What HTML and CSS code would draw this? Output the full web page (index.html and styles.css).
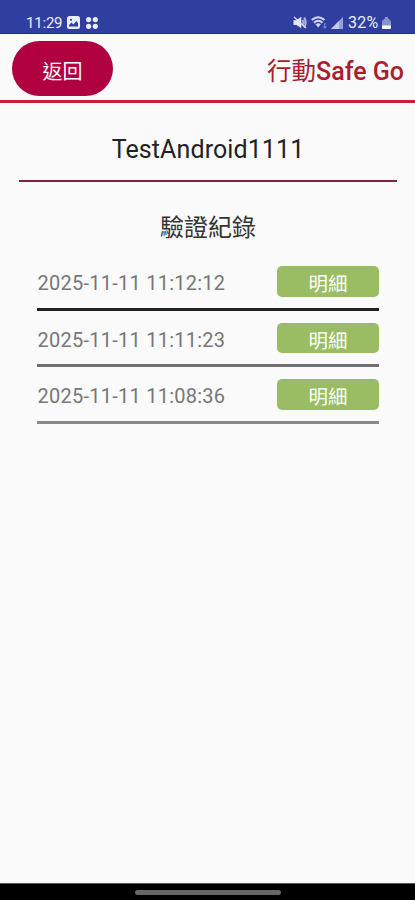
FILE: index.html
```html
<!DOCTYPE html>
<html lang="zh-Hant">
<head>
    <meta charset="UTF-8">
    <meta name="viewport" content="width=device-width, initial-scale=1.0">
    <title>行動Safe Go</title>
    <link rel="stylesheet" href="styles.css">
</head>
<body>
    <div class="screen">
        <!-- Status bar -->
        <div class="status-bar">
            <div class="status-left">
                <span class="clock">11:29</span>
                <svg class="icon-image" width="13" height="13" viewBox="0 0 13 13">
                    <rect width="13" height="13" rx="2.5" fill="#e9edfb"/>
                    <path d="M2 10.5V9l2.5-2.5 2 2L9.3 5 11 7.3v3.2z" fill="#303f9f"/>
                    <circle cx="4" cy="3.8" r="1.1" fill="#303f9f"/>
                </svg>
                <svg class="icon-dots" width="14" height="14" viewBox="0 0 14 14" fill="#e9edfb">
                    <circle cx="3.6" cy="3.6" r="2.6"/>
                    <circle cx="10.3" cy="3.6" r="2.6"/>
                    <circle cx="3.6" cy="10.3" r="2.6"/>
                    <circle cx="10.3" cy="10.3" r="2.6"/>
                </svg>
            </div>
            <div class="status-right">
                <svg width="14" height="13" viewBox="0 0 14 13">
                    <path d="M0.5 4.2h3L8.300 0.800v11.400L3.500 9h-3z" fill="#e3e8fa"/>
                    <path d="M9.500 4q2 2.500 0 5M11.200 1.500q3 5 0 10" fill="none" stroke="#aab4e2" stroke-width="2"/>
                    <path d="M1 1l12 11" stroke="#dde2f7" stroke-width="1.300"/>
                </svg>
                <svg class="icon-wifi" width="17" height="13" viewBox="0 0 17 13">
                    <path d="M0.800 4q6.200-5.600 12.700 0M3 6.800q4.300-4 8.500 0" fill="none" stroke="#d0d7f3" stroke-width="2"/>
                    <path d="M4.500 8.300q2.700-2 5.400 0L7.200 11.500z" fill="#d0d7f3"/>
                    <path d="M13.800 7v5M12.200 10.400l1.600 1.800 1.600-1.800" fill="none" stroke="#8e9ad6" stroke-width="1"/>
                </svg>
                <svg class="icon-signal" width="12" height="12" viewBox="0 0 12 12">
                    <path d="M0 12L12 0v12z" fill="#95a1db"/>
                    <path d="M0 12L8 4v8z" fill="#c3cbee"/>
                </svg>
                <span class="battery-text">32%</span>
                <svg class="icon-battery" width="9" height="12" viewBox="0 0 9 12">
                    <path d="M3 0h3v1.200L9 4v6.500A1.500 1.500 0 0 1 7.500 12h-6A1.500 1.500 0 0 1 0 10.500V4l3-2.800z" fill="#8793d0"/>
                    <path d="M0 8.500h9v2A1.500 1.500 0 0 1 7.500 12h-6A1.500 1.500 0 0 1 0 10.500z" fill="#fff"/>
                </svg>
            </div>
        </div>

        <!-- Header -->
        <div class="header">
            <button class="back-btn">返回</button>
            <h1 class="app-name"><span class="app-name-zh">行動</span>Safe Go</h1>
        </div>

        <!-- Record list -->
        <div class="content">
            <h2 class="device-name">TestAndroid1111</h2>
            <h3 class="list-title">驗證紀錄</h3>
            <ul class="record-list">
                <li class="record first">
                    <span class="time">2025-11-11 11:12:12</span>
                    <button class="detail-btn">明細</button>
                </li>
                <li class="record second">
                    <span class="time">2025-11-11 11:11:23</span>
                    <button class="detail-btn">明細</button>
                </li>
                <li class="record">
                    <span class="time">2025-11-11 11:08:36</span>
                    <button class="detail-btn">明細</button>
                </li>
            </ul>
        </div>

        <!-- Gesture bar -->
        <div class="nav-bar">
            <div class="nav-handle"></div>
        </div>
    </div>
</body>
</html>
```
FILE: styles.css
```css
* {
    margin: 0;
    padding: 0;
    box-sizing: border-box;
}

body {
    font-family: Roboto, "Noto Sans CJK TC", sans-serif;
    background: #fafafa;
}

.screen {
    display: flex;
    flex-direction: column;
    width: 415px;
    height: 900px;
    background: #fafafa;
    overflow: hidden;
}

/* Status bar */
.status-bar {
    display: flex;
    justify-content: space-between;
    height: 34px;
    padding: 11px 24px 0 26px;
    background: #303f9f;
    border-bottom: 1px solid #1f2b94;
    color: #e9edfb;
}

.status-left,
.status-right {
    display: flex;
    align-items: center;
    height: 23px;
}

.clock,
.battery-text {
    font-size: 15px;
    line-height: 23px;
}

.clock {
    width: 36px;
    padding-top: 1px;
    letter-spacing: -0.2px;
}

.icon-image {
    margin-left: 5px;
}

.icon-dots {
    margin-left: 5px;
}

.icon-wifi {
    margin-left: 4px;
}

.icon-signal {
    margin-left: 3px;
}

.battery-text {
    width: 32px;
    margin-left: 5px;
    font-size: 16px;
    letter-spacing: 0.2px;
}

.icon-battery {
    margin-left: 2px;
}

/* Header */
.header {
    display: flex;
    align-items: center;
    justify-content: space-between;
    height: 69px;
    padding: 2px 11px 0 12px;
    border-bottom: 3px solid #c8202f;
}

.back-btn {
    width: 101px;
    height: 55px;
    border: none;
    border-radius: 28px;
    background: #b00040;
    color: #fff;
    font-family: inherit;
    font-size: 20px;
    line-height: 55px;
    padding-top: 4px;
}

.app-name {
    padding-top: 7px;
    font-size: 25px;
    font-weight: 500;
    line-height: 32px;
    color: #a91d2d;
}

.app-name-zh {
    font-size: 24.5px;
    font-weight: 400;
}

/* Content */
.content {
    flex: 1;
    padding: 0 18px 0 19px;
}

.device-name {
    height: 79px;
    padding-top: 30px;
    border-bottom: 2px solid #871f43;
    font-size: 25px;
    font-weight: 400;
    line-height: 34px;
    letter-spacing: 0.1px;
    text-align: center;
    color: #222;
}

.list-title {
    padding-top: 28px;
    font-size: 24px;
    font-weight: 400;
    line-height: 36px;
    text-align: center;
    color: #333;
}

.record-list {
    list-style: none;
    margin-top: 8px;
    padding: 0 18px;
}

.record {
    display: flex;
    align-items: flex-start;
    justify-content: space-between;
    height: 56.5px;
    padding-top: 12px;
    border-bottom: 3px solid #888;
}

.record.first {
    border-bottom-color: #222;
}

.record.second {
    border-bottom-color: #707070;
}

.time {
    padding-left: 0.5px;
    font-size: 20px;
    line-height: 34px;
    letter-spacing: 0.25px;
    color: #777;
}

.detail-btn {
    width: 102px;
    height: 30.5px;
    border: none;
    border-radius: 5px;
    background: #9abc62;
    color: #fff;
    font-family: inherit;
    font-size: 19.5px;
    line-height: 30px;
    padding-top: 4px;
}

/* Gesture bar */
.nav-bar {
    display: flex;
    justify-content: center;
    height: 17px;
    padding-top: 6px;
    background: #000;
    border-top: 1px solid #555;
}

.nav-handle {
    width: 146px;
    height: 5px;
    border-radius: 3px;
    background: #666;
}
```
